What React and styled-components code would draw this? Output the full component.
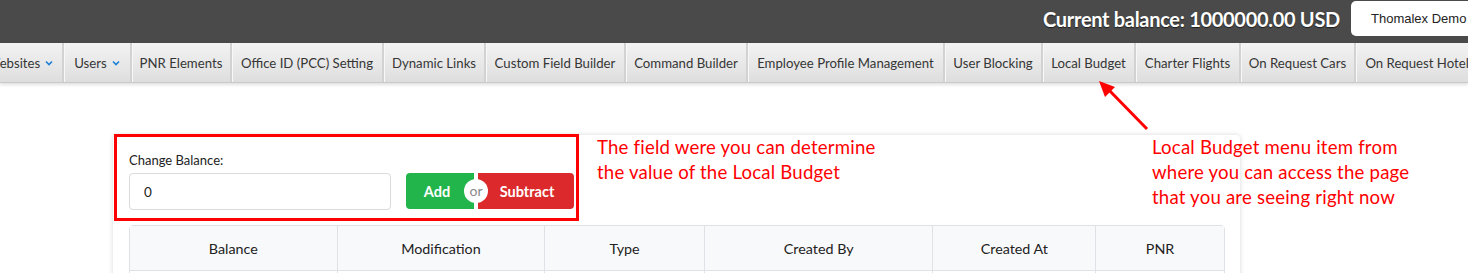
import React from "react";
import styled, { createGlobalStyle } from "styled-components";

const GlobalStyle = createGlobalStyle`
  html, body { margin: 0; padding: 0; background: #fff; }
  body { font-family: Lato, "Open Sans", sans-serif; overflow: hidden; }
  * { box-sizing: border-box; }
`;

const Page = styled.div`
  position: relative;
  width: 1468px;
  height: 273px;
  overflow: hidden;
`;

const TopBar = styled.header`
  height: 43px;
  background: #4a4a4a;
  display: flex;
  align-items: center;
  justify-content: flex-end;
`;

const Balance = styled.div`
  color: #fff;
  font-weight: 700;
  font-size: 20px;
  letter-spacing: -0.3px;
  text-shadow: 0 1px 1px rgba(0, 0, 0, 0.6);
  margin-right: 11px;
  margin-top: -5px;
`;

const UserButton = styled.div`
  background: #fff;
  border-radius: 5px;
  height: 35px;
  width: 140px;
  margin-right: -23px;
  margin-top: -6px;
  padding-left: 20px;
  display: flex;
  align-items: center;
  font-family: "Liberation Sans", Arial, sans-serif;
  font-size: 13px;
  color: #222;
`;

const NavBar = styled.nav`
  height: 40px;
  display: flex;
  background: linear-gradient(#f3f3f3, #dedede);
  border-bottom: 1px solid #c9c9c9;
  box-shadow: 0 2px 3px rgba(0, 0, 0, 0.12);
  white-space: nowrap;
`;

const NavItem = styled.div`
  flex: none;
  width: ${(p) => p.$w}px;
  margin-left: ${(p) => p.$ml || 0}px;
  display: flex;
  align-items: center;
  justify-content: center;
  gap: 5px;
  font-size: 13.2px;
  color: #363636;
  border-right: 2px solid #d2d2d2;
  box-shadow: 1px 0 0 #f8f8f8;
`;

const Chevron = () => (
  <svg width="8" height="6" viewBox="0 0 8 6">
    <path d="M1 1.5 L4 4.5 L7 1.5" fill="none" stroke="#1a7fd8" strokeWidth="1.6" />
  </svg>
);

const Main = styled.main`
  padding: 52px 0 0 113px;
`;

const Card = styled.section`
  position: relative;
  width: 1127px;
  height: 200px;
  background: #fff;
  border-radius: 4px;
  box-shadow: 0 0 5px rgba(0, 0, 0, 0.16);
  padding: 15px 15px 0 16px;
`;

const Label = styled.label`
  display: block;
  font-size: 13px;
  color: #222;
  height: 23px;
  padding-top: 2px;
`;

const FormRow = styled.div`
  display: flex;
  align-items: flex-start;
  gap: 15px;
`;

const Input = styled.div`
  width: 262px;
  height: 37px;
  border: 1px solid #dadada;
  border-radius: 4px;
  display: flex;
  align-items: center;
  padding-left: 14px;
  font-size: 13.5px;
  color: #222;
`;

const ButtonGroup = styled.div`
  position: relative;
  display: flex;
  gap: 4px;
`;

const ActionButton = styled.button`
  height: 36px;
  width: ${(p) => p.$w}px;
  border: none;
  border-radius: ${(p) => (p.$left ? "4px 0 0 4px" : "0 4px 4px 0")};
  background: ${(p) => p.$bg};
  color: #fff;
  font-family: Lato, sans-serif;
  font-weight: 700;
  font-size: 14.5px;
  padding: ${(p) => (p.$left ? "0 6px 0 0" : "0 0 0 2px")};
`;

const OrBadge = styled.span`
  position: absolute;
  left: 58px;
  top: 6px;
  width: 24px;
  height: 24px;
  border-radius: 50%;
  background: #fff;
  color: #8a8a8a;
  font-size: 14px;
  display: flex;
  align-items: center;
  justify-content: center;
  padding-bottom: 2px;
`;

const Table = styled.table`
  margin-top: 15px;
  width: 1096px;
  border-collapse: separate;
  border-spacing: 0;
  border: 1px solid #dee2e6;
  border-radius: 4px 4px 0 0;
`;

const Th = styled.th`
  width: ${(p) => p.$w}px;
  height: 45px;
  background: #f8f9fa;
  font-size: 14.3px;
  font-weight: 400;
  color: #222;
  text-align: center;
  border-left: ${(p) => (p.$first ? "none" : "1px solid #dee2e6")};
  border-bottom: 1px solid #dee2e6;
`;

const Td = styled.td`
  height: 30px;
  border-left: ${(p) => (p.$first ? "none" : "1px solid #dee2e6")};
`;

const Highlight = styled.div`
  position: absolute;
  left: 114px;
  top: 134px;
  width: 465px;
  height: 87px;
  border: 3px solid #ff0000;
  pointer-events: none;
`;

const Note = styled.div`
  position: absolute;
  left: ${(p) => p.$x}px;
  top: ${(p) => p.$y}px;
  font-family: Lato, sans-serif;
  font-size: 18.6px;
  letter-spacing: 0.2px;
  line-height: 25px;
  color: #ff0000;
  white-space: nowrap;
`;

const Arrow = styled.svg`
  position: absolute;
  left: 1095px;
  top: 78px;
`;

const navItems = [
  { t: "Websites", w: 86, ml: -22, chev: true },
  { t: "Users", w: 68, chev: true },
  { t: "PNR Elements", w: 100 },
  { t: "Office ID (PCC) Setting", w: 152 },
  { t: "Dynamic Links", w: 102 },
  { t: "Custom Field Builder", w: 140 },
  { t: "Command Builder", w: 122 },
  { t: "Employee Profile Management", w: 197 },
  { t: "User Blocking", w: 98 },
  { t: "Local Budget", w: 93 },
  { t: "Charter Flights", w: 105 },
  { t: "On Request Cars", w: 115 },
  { t: "On Request Hotels", w: 130 },
];

const cols = [
  { t: "Balance", w: 207 },
  { t: "Modification", w: 208 },
  { t: "Type", w: 160 },
  { t: "Created By", w: 229 },
  { t: "Created At", w: 163 },
  { t: "PNR", w: 129 },
];

export default function App() {
  return (
    <Page>
      <GlobalStyle />
      <TopBar>
        <Balance>Current balance: 1000000.00 USD</Balance>
        <UserButton>Thomalex Demo</UserButton>
      </TopBar>
      <NavBar>
        {navItems.map((n) => (
          <NavItem key={n.t} $w={n.w} $ml={n.ml}>
            {n.t}
            {n.chev && <Chevron />}
          </NavItem>
        ))}
      </NavBar>
      <Main>
        <Card>
          <Label>Change Balance:</Label>
          <FormRow>
            <Input>0</Input>
            <ButtonGroup>
              <ActionButton $left $w={68} $bg="#22b54b">Add</ActionButton>
              <ActionButton $w={96} $bg="#dc2a2c">Subtract</ActionButton>
              <OrBadge>or</OrBadge>
            </ButtonGroup>
          </FormRow>
          <Table>
            <thead>
              <tr>
                {cols.map((c, i) => (
                  <Th key={c.t} $w={c.w} $first={i === 0}>{c.t}</Th>
                ))}
              </tr>
            </thead>
            <tbody>
              <tr>
                {cols.map((c, i) => (
                  <Td key={c.t} $first={i === 0} />
                ))}
              </tr>
            </tbody>
          </Table>
        </Card>
      </Main>
      <Highlight />
      <Note $x={597} $y={135}>
        The field were you can determine
        <br />
        the value of the Local Budget
      </Note>
      <Note $x={1152} $y={135}>
        Local Budget menu item from
        <br />
        where you can access the page
        <br />
        that you are seeing right now
      </Note>
      <Arrow width="60" height="60" viewBox="0 0 60 60">
        <line x1="52" y1="51" x2="12" y2="10" stroke="#ff0000" strokeWidth="3" />
        <polygon points="4,3 20,9 10,19" fill="#ff0000" />
      </Arrow>
    </Page>
  );
}
